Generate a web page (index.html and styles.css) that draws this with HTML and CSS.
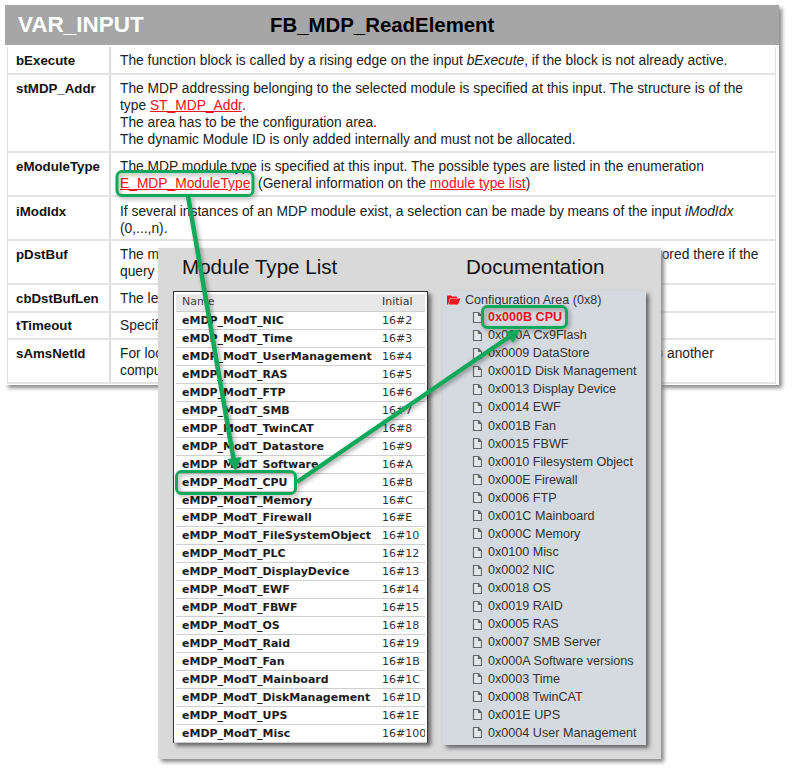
FILE: index.html
```html
<!DOCTYPE html>
<html lang="en">
<head>
<meta charset="utf-8">
<title>FB_MDP_ReadElement</title>
<link rel="stylesheet" href="styles.css">
</head>
<body>
<main class="doc">
  <header class="doc-head">
    <span class="doc-kind">VAR_INPUT</span>
    <span class="doc-name">FB_MDP_ReadElement</span>
  </header>
  <div class="params">
    <div class="param h27"><div class="pname">bExecute</div><div class="pdesc">The function block is called by a rising edge on the input <i>bExecute</i>, if the block is not already active.</div></div>
    <div class="param h77"><div class="pname">stMDP_Addr</div><div class="pdesc">The MDP addressing belonging to the selected module is specified at this input. The structure is of the<br>type <a href="#">ST_MDP_Addr</a>.<br>The area has to be the configuration area.<br>The dynamic Module ID is only added internally and must not be allocated.</div></div>
    <div class="param h43"><div class="pname">eModuleType</div><div class="pdesc">The MDP module type is specified at this input. The possible types are listed in the enumeration<br><a href="#">E_MDP_ModuleType</a>. (General information on the <a href="#">module type list</a>)</div></div>
    <div class="param h43 low"><div class="pname">iModIdx</div><div class="pdesc">If several instances of an MDP module exist, a selection can be made by means of the input <i>iModIdx</i><br>(0,...,n).</div></div>
    <div class="param h43"><div class="pname">pDstBuf</div><div class="pdesc">The memory address of the buffer is given at this input. The data read by the block are stored there if the<br>query was successful.</div></div>
    <div class="param h27"><div class="pname">cbDstBufLen</div><div class="pdesc">The length of the buffer in bytes.</div></div>
    <div class="param h26 high"><div class="pname">tTimeout</div><div class="pdesc">Specifies a timeout.</div></div>
    <div class="param h43"><div class="pname">sAmsNetId</div><div class="pdesc">For local access an empty string is sufficient. The AMS Net ID is used to obtain access to another<br>computer.</div></div>
  </div>
</main>

<section class="overlay">
  <div class="ov-col">
    <h2 class="ov-title">Module Type List</h2>
    <div class="mtable">
      <div class="mrow mhead"><span>Name</span><span class="minit">Initial</span></div>
      <div class="mrow"><b>eMDP_ModT_NIC</b><span class="minit">16#2</span></div>
      <div class="mrow"><b>eMDP_ModT_Time</b><span class="minit">16#3</span></div>
      <div class="mrow"><b>eMDP_ModT_UserManagement</b><span class="minit">16#4</span></div>
      <div class="mrow"><b>eMDP_ModT_RAS</b><span class="minit">16#5</span></div>
      <div class="mrow"><b>eMDP_ModT_FTP</b><span class="minit">16#6</span></div>
      <div class="mrow"><b>eMDP_ModT_SMB</b><span class="minit">16#7</span></div>
      <div class="mrow"><b>eMDP_ModT_TwinCAT</b><span class="minit">16#8</span></div>
      <div class="mrow"><b>eMDP_ModT_Datastore</b><span class="minit">16#9</span></div>
      <div class="mrow"><b>eMDP_ModT_Software</b><span class="minit">16#A</span></div>
      <div class="mrow"><b>eMDP_ModT_CPU</b><span class="minit">16#B</span></div>
      <div class="mrow"><b>eMDP_ModT_Memory</b><span class="minit">16#C</span></div>
      <div class="mrow"><b>eMDP_ModT_Firewall</b><span class="minit">16#E</span></div>
      <div class="mrow"><b>eMDP_ModT_FileSystemObject</b><span class="minit">16#10</span></div>
      <div class="mrow"><b>eMDP_ModT_PLC</b><span class="minit">16#12</span></div>
      <div class="mrow"><b>eMDP_ModT_DisplayDevice</b><span class="minit">16#13</span></div>
      <div class="mrow"><b>eMDP_ModT_EWF</b><span class="minit">16#14</span></div>
      <div class="mrow"><b>eMDP_ModT_FBWF</b><span class="minit">16#15</span></div>
      <div class="mrow"><b>eMDP_ModT_OS</b><span class="minit">16#18</span></div>
      <div class="mrow"><b>eMDP_ModT_Raid</b><span class="minit">16#19</span></div>
      <div class="mrow"><b>eMDP_ModT_Fan</b><span class="minit">16#1B</span></div>
      <div class="mrow"><b>eMDP_ModT_Mainboard</b><span class="minit">16#1C</span></div>
      <div class="mrow"><b>eMDP_ModT_DiskManagement</b><span class="minit">16#1D</span></div>
      <div class="mrow"><b>eMDP_ModT_UPS</b><span class="minit">16#1E</span></div>
      <div class="mrow"><b>eMDP_ModT_Misc</b><span class="minit">16#100</span></div>
    </div>
  </div>
  <div class="ov-col ov-right">
    <h2 class="ov-title ov-title-doc">Documentation</h2>
    <div class="tree">
      <svg width="0" height="0" class="defs"><defs>
        <symbol id="page" viewBox="0 0 10 11"><path d="M1.500 .5H6.500L9.500 3.500V10.500H1.500Z M6.500 .5V3.500H9.500" fill="#e4e7ea" stroke="#666" stroke-width="1.200"/></symbol>
      </defs></svg>
      <div class="troot"><svg class="folder" width="14" height="10" viewBox="0 0 14 10"><path d="M0 1.500Q0 .5 1 .5H4L5 1.500H10V3H3L1 9.500H.5Q0 9.500 0 9Z" fill="#e8101c"/><path d="M3.500 3.500H13.500L11 9.500H1.500Z" fill="#f01822"/></svg>Configuration Area (0x8)</div>
      <div class="titem tred"><svg class="pg"><use href="#page"/></svg>0x000B CPU</div>
      <div class="titem"><svg class="pg"><use href="#page"/></svg>0x000A Cx9Flash</div>
      <div class="titem"><svg class="pg"><use href="#page"/></svg>0x0009 DataStore</div>
      <div class="titem"><svg class="pg"><use href="#page"/></svg>0x001D Disk Management</div>
      <div class="titem"><svg class="pg"><use href="#page"/></svg>0x0013 Display Device</div>
      <div class="titem"><svg class="pg"><use href="#page"/></svg>0x0014 EWF</div>
      <div class="titem"><svg class="pg"><use href="#page"/></svg>0x001B Fan</div>
      <div class="titem"><svg class="pg"><use href="#page"/></svg>0x0015 FBWF</div>
      <div class="titem"><svg class="pg"><use href="#page"/></svg>0x0010 Filesystem Object</div>
      <div class="titem"><svg class="pg"><use href="#page"/></svg>0x000E Firewall</div>
      <div class="titem"><svg class="pg"><use href="#page"/></svg>0x0006 FTP</div>
      <div class="titem"><svg class="pg"><use href="#page"/></svg>0x001C Mainboard</div>
      <div class="titem"><svg class="pg"><use href="#page"/></svg>0x000C Memory</div>
      <div class="titem"><svg class="pg"><use href="#page"/></svg>0x0100 Misc</div>
      <div class="titem"><svg class="pg"><use href="#page"/></svg>0x0002 NIC</div>
      <div class="titem"><svg class="pg"><use href="#page"/></svg>0x0018 OS</div>
      <div class="titem"><svg class="pg"><use href="#page"/></svg>0x0019 RAID</div>
      <div class="titem"><svg class="pg"><use href="#page"/></svg>0x0005 RAS</div>
      <div class="titem"><svg class="pg"><use href="#page"/></svg>0x0007 SMB Server</div>
      <div class="titem"><svg class="pg"><use href="#page"/></svg>0x000A Software versions</div>
      <div class="titem"><svg class="pg"><use href="#page"/></svg>0x0003 Time</div>
      <div class="titem"><svg class="pg"><use href="#page"/></svg>0x0008 TwinCAT</div>
      <div class="titem"><svg class="pg"><use href="#page"/></svg>0x001E UPS</div>
      <div class="titem"><svg class="pg"><use href="#page"/></svg>0x0004 User Management</div>
    </div>
  </div>
</section>

<svg class="marks" width="792" height="771" viewBox="0 0 792 771" aria-hidden="true">
  <g fill="none" stroke="#10a85a" stroke-width="3">
    <rect x="117" y="171.500" width="136" height="24" rx="5"/>
    <rect x="176.500" y="471.500" width="119" height="22" rx="5"/>
    <rect x="482.500" y="306.500" width="84" height="21" rx="5"/>
    <line x1="188" y1="196" x2="233.500" y2="459" stroke-width="4.500"/>
    <line x1="297" y1="482" x2="509" y2="337" stroke-width="4.500"/>
  </g>
  <g fill="#10a85a">
    <polygon points="235.500,471 227.500,459 241.500,457"/>
    <polygon points="520,329.500 505.500,331.500 513,343"/>
  </g>
</svg>
</body>
</html>
```
FILE: styles.css
```css
* { box-sizing: border-box; }
html, body { margin: 0; padding: 0; background: #fff; }
body { width: 792px; height: 771px; position: relative; overflow: hidden; font-family: "Liberation Sans", Arial, sans-serif; }

.doc { margin: 5px 0 0 5px; width: 774px; height: 380px; background: #fff; box-shadow: 3px 3px 4px #8a8a8a; }
.doc-head { height: 40px; background: #a6a6a6; display: flex; align-items: center; padding-left: 13px; }
.doc-kind { width: 252px; color: #fff; font-weight: bold; font-size: 22.500px; }
.doc-name { color: #000; font-weight: bold; font-size: 20.400px; }

.params { margin: 2px 3px 0 2px; border-left: 1px solid #e0e0e0; border-right: 1px solid #e0e0e0; }
.param { display: flex; border-bottom: 2px solid #e3e3e3; font-size: 13.800px; line-height: 16.900px; color: #222; padding-top: 6px; }
.param.low { padding-top: 7px; }
.param.high { padding-top: 5px; }
.h27 { height: 28px; }
.h77 { height: 78px; }
.h43 { height: 44px; }
.h26 { height: 27px; }
.pname { width: 103px; padding-left: 8px; margin-top: -6px; padding-top: 6px; border-right: 2px solid #dcdcdc; font-weight: bold; font-size: 13.300px; color: #111; }
.low .pname { margin-top: -7px; padding-top: 7px; }
.high .pname { margin-top: -5px; padding-top: 5px; }
.pdesc { flex: 1; padding-left: 9px; white-space: nowrap; }
.pdesc a { color: #f01020; text-decoration: underline; }

.overlay { position: absolute; left: 158px; top: 248px; width: 503px; height: 511px; background: #d9d9d9; box-shadow: 3px 3px 4px #8a8a8a; display: flex; padding: 0 15px 0 15px; }
.ov-col { width: 255px; }
.ov-right { width: 203px; margin-left: 15px; }
.ov-title { margin: 7px 0 0 9px; height: 36px; font-weight: normal; font-size: 20.600px; line-height: 24px; color: #111; }
.ov-title-doc { margin-left: 23px; }

.mtable { width: 255px; height: 452px; background: #fff; border: 1px solid #333; outline: 2px solid #fff; outline-offset: -3px; box-shadow: 3px 3px 4px #666; font-family: "DejaVu Sans", sans-serif; font-size: 11px; }
.mrow { height: 17.960px; padding-left: 8px; display: flex; align-items: center; justify-content: space-between; border-bottom: 1px solid #cfcfcf; white-space: nowrap; color: #1c1c1c; }
.mrow b { font-weight: bold; }
.mhead { height: 20px; background: #e8e8e8; color: #444; }
.minit { width: 45px; flex: none; color: #333; }

.tree { height: 454px; background: #d5dae0; box-shadow: 3px 3px 4px #666; font-size: 12.600px; color: #333; padding: 0 0 0 4px; }
.defs { position: absolute; }
.troot { height: 17px; display: flex; align-items: center; }
.folder { margin-right: 4px; }
.titem { height: 18.090px; display: flex; align-items: center; padding-left: 25px; white-space: nowrap; }
.pg { width: 10px; height: 11px; margin-right: 6px; }
.tred { color: #f01020; font-weight: bold; }

.marks { position: absolute; left: 0; top: 0; filter: drop-shadow(2px 2px 2px rgba(0,0,0,.35)); }
```
